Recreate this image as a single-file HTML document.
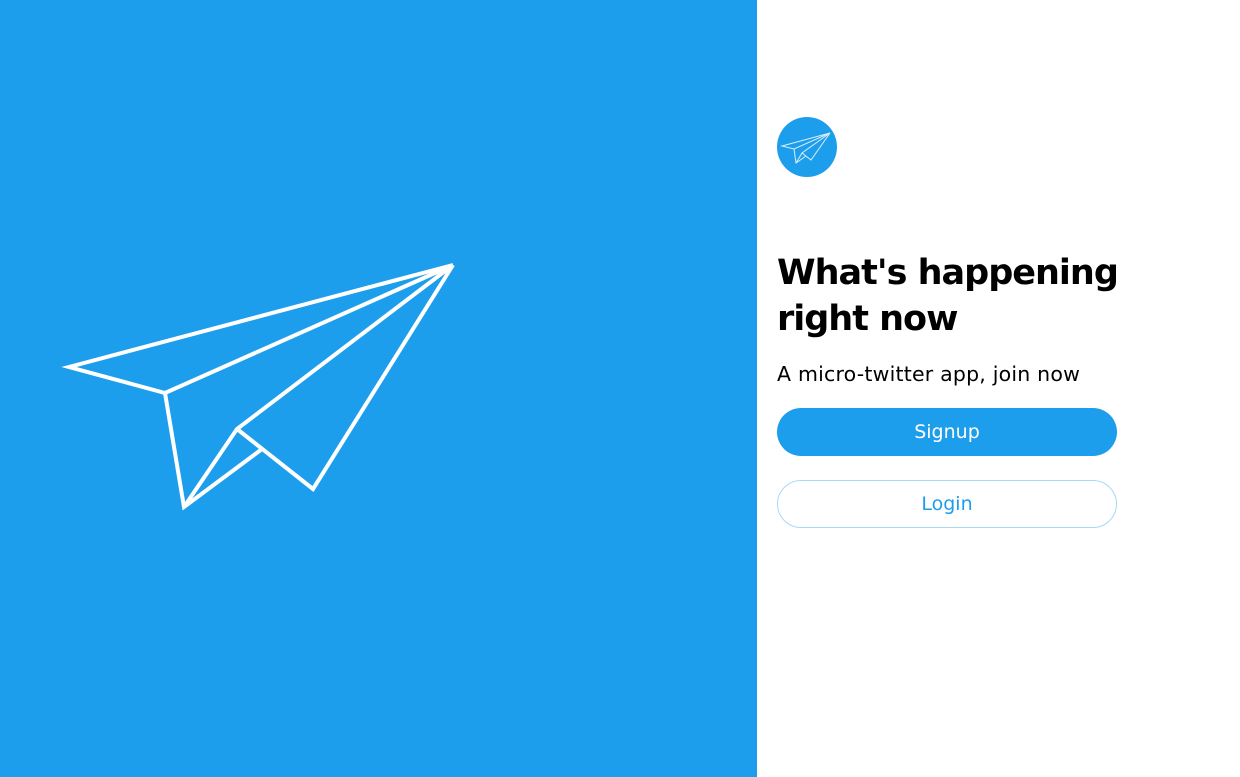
<!DOCTYPE html>
<html><head><style>
body{margin:0;width:1240px;height:777px;overflow:hidden;font-family:"DejaVu Sans","Liberation Sans",sans-serif;background:#fff;position:relative}
.left{position:absolute;left:0;top:0;width:757px;height:777px;background:#1d9eec}
h1{position:absolute;left:777px;top:250px;margin:0;font-size:35px;line-height:46px;font-weight:bold;color:#000;letter-spacing:-1px}
.sub{position:absolute;left:777px;top:362px;font-size:20.5px;color:#000;letter-spacing:0.2px}
.btn{position:absolute;left:777px;width:340px;height:48px;border-radius:24px;box-sizing:border-box;text-align:center;line-height:48px;font-size:19px}
.s{top:408px;background:#1d9eec;color:#fff}
.l{top:480px;border:1px solid #a9d8f5;color:#1d9eec;background:#fff;line-height:46px}
</style></head><body>
<div class="left">
<svg width="757" height="777" style="position:absolute;left:0;top:0">
<g fill="none" stroke="#fff" stroke-width="4" stroke-linejoin="miter">
<path d="M453 265 L69 367 L165 393 Z"/>
<path d="M165 393 L184 507 L262 449"/>
<path d="M184 507 L237 429 L453 265"/>
<path d="M237 429 L313 489 L453 265"/>
</g></svg>
</div>
<svg width="62" height="62" style="position:absolute;left:776px;top:116px">
<circle cx="31" cy="31" r="30" fill="#1d9eec"/>
<g fill="none" stroke="#d8eefc" stroke-width="1" transform="translate(6,17)">
<path d="M48 0 L0 13 L12 16 Z"/><path d="M12 16 L14 30 L24 23"/><path d="M14 30 L20 20 L48 0"/><path d="M20 20 L29 27 L48 0"/>
</g></svg>
<h1>What's happening<br>right now</h1>
<div class="sub">A micro-twitter app, join now</div>
<div class="btn s">Signup</div>
<div class="btn l">Login</div>
</body></html>
